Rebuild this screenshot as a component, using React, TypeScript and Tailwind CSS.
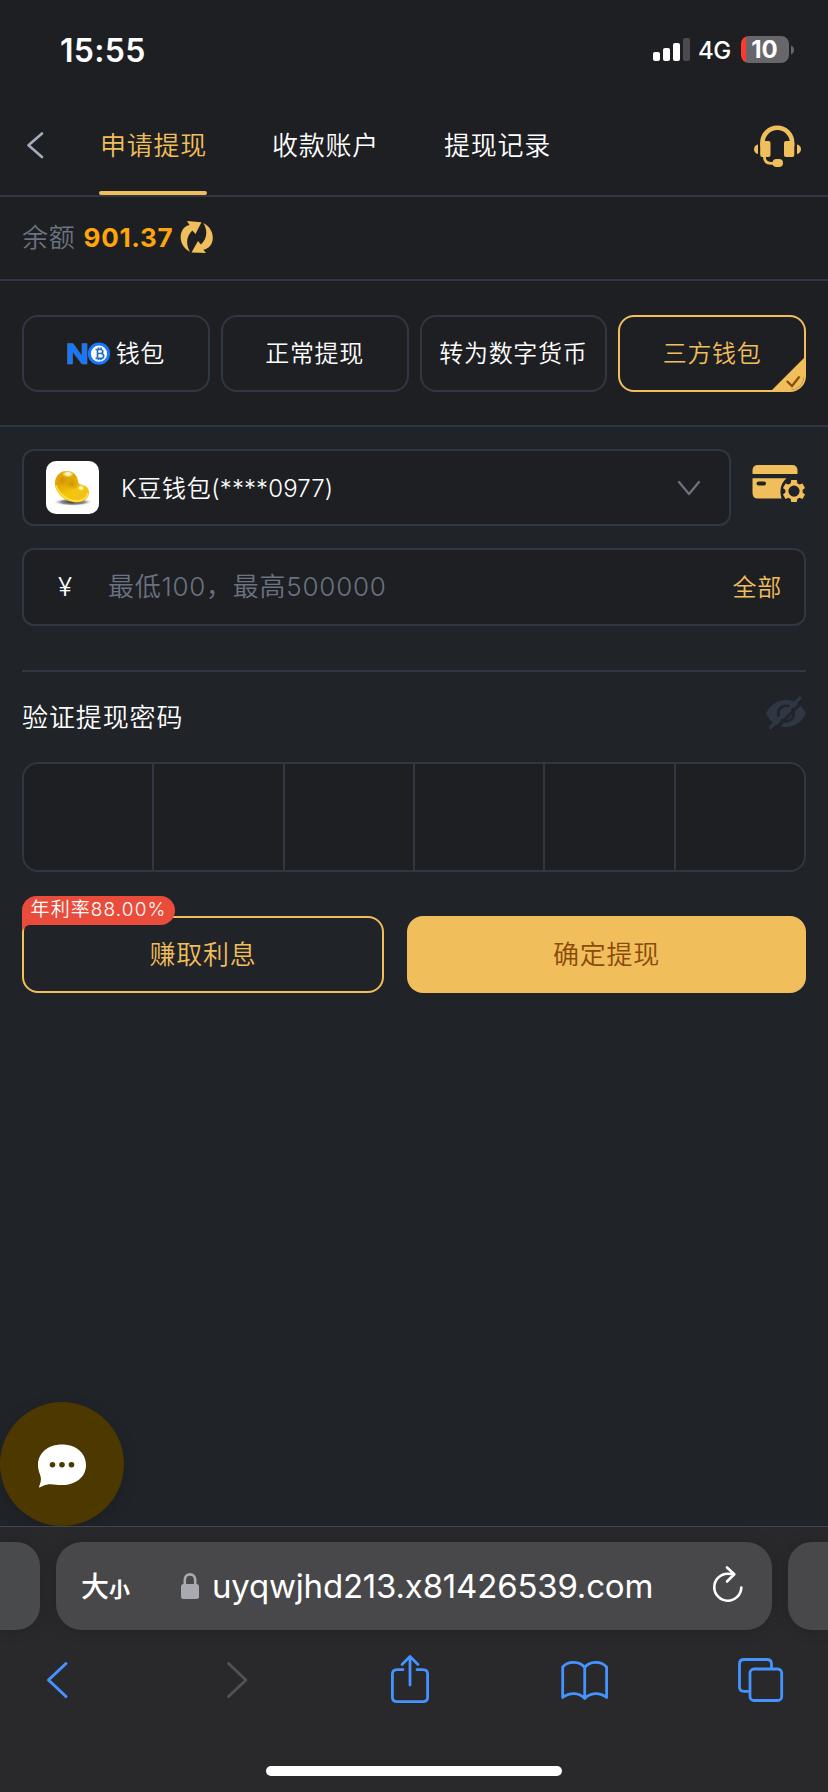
import React from "react";

const tabs = ["申请提现", "收款账户", "提现记录"];

function StatusBar() {
  return (
    <div className="flex h-[98px] shrink-0 items-start justify-between pr-[33px] pl-[60px]">
      <span className="mt-[35px] text-[32px] leading-[32px] font-semibold tracking-[0.3px] text-white">15:55</span>
      <div className="mt-[36px] flex h-[27px] items-center">
        <svg className="h-[27px] w-[38px]" viewBox="653 36 38 27">
          <rect x="653" y="52" width="7" height="9" rx="2" fill="#fff" />
          <rect x="663" y="48" width="7" height="13" rx="2" fill="#fff" />
          <rect x="673" y="43" width="7" height="18" rx="2" fill="#fff" />
          <rect x="683" y="38" width="7" height="23" rx="2" fill="#4b4b4f" />
        </svg>
        <span className="mt-[2px] ml-[7px] w-[34px] text-[24px] leading-[27px] font-medium tracking-[-0.5px] text-white">4G</span>
        <div className="ml-[9px] flex h-[27px] w-[48px] items-center justify-center overflow-hidden rounded-[8px] bg-[linear-gradient(90deg,#ff3b30_5px,#67676b_5px)] text-[24px] leading-none font-bold text-white">
          <span className="mt-px -ml-[1px]">10</span>
        </div>
        <svg className="ml-[2px] h-[10px] w-[4px]" viewBox="0 0 4 10">
          <path d="M0 0.5C2 1 3 3 3 5S2 9 0 9.5Z" fill="#67676b" />
        </svg>
      </div>
    </div>
  );
}

function Header() {
  return (
    <div className="flex h-[99px] shrink-0 items-stretch border-b-2 border-[#303742] pr-[26px] pl-[26px]">
      <svg className="mt-[33px] h-[28px] w-[18px]" viewBox="26 131 18 28" fill="none" stroke="#a3aebd" strokeWidth="2.6" strokeLinecap="round" strokeLinejoin="round">
        <path d="M42 133.500L28.500 145.300L42 157" />
      </svg>
      <div className="ml-[55px] flex gap-[64px]">
        {tabs.map((t, i) => (
          <div
            key={t}
            className={
              i === 0
                ? "flex w-[108px] flex-col items-center justify-between text-[#f0be5b]"
                : "flex w-[108px] flex-col items-center justify-between text-white"
            }
          >
            <span className="mt-[35px] pl-[1px] text-[26px] leading-[26px] tracking-[0.8px] whitespace-nowrap">{t}</span>
            {i === 0 && <span className="h-[4px] w-full rounded-[2px] bg-[#f0be5b]" />}
          </div>
        ))}
      </div>
      <svg className="mt-[26px] ml-auto h-[44px] w-[50px]" viewBox="752 124 50 44" fill="#f0be5b">
        <path d="M762.500 146V142.500A14.800 14.800 0 0 1 792.100 142.500V146" fill="none" stroke="#f0be5b" strokeWidth="4.600" />
        <rect x="760.200" y="141" width="10.300" height="16" rx="2" />
        <rect x="784" y="141" width="10.300" height="16" rx="2" />
        <path d="M758 144.500V154C755.500 153.500 754 151.500 754 149.200S755.500 145 758 144.500Z" />
        <path d="M797 144.500V154C799.500 153.500 801 151.500 801 149.200S799.500 145 797 144.500Z" />
        <path d="M764.300 156C764.300 161 766.500 163.300 771 163.300H777" fill="none" stroke="#f0be5b" strokeWidth="2.800" />
        <rect x="772.500" y="159" width="10.500" height="8" rx="4" />
      </svg>
    </div>
  );
}

function Balance() {
  return (
    <div className="flex h-[84px] shrink-0 items-center border-b-2 border-[#303742] pl-[22px]">
      <span className="text-[26px] leading-[26px] tracking-[0.8px] text-[#6b7280]">余额</span>
      <span className="ml-[8px] w-[91px] text-[26px] leading-[26px] font-bold tracking-[0.7px] text-[#ffa60a]">901.37</span>
      <svg className="ml-[5px] h-[34px] w-[34px]" viewBox="180 221 34 34" fill="#f0be5b">
        <path d="M187 221L201.500 222.200L195.500 234L192.300 230.500C187 235.500 185 243 190 251.700C182 248 179 239 181.500 232C183 228 186 225.500 189.500 225Z" />
        <path d="M206 253L191.500 252.600L198 241L200.900 244.500C206.500 239.500 208.500 231.500 203.300 223C211 226.500 214.500 235.500 212 242.500C210.500 246.500 207 249.300 203.300 249.800Z" />
      </svg>
    </div>
  );
}

function NoLogo() {
  return (
    <svg className="mr-[5px] h-[23px] w-[44px]" viewBox="67 341 44 23">
      <path d="M67.500 363V342.500H73L82 355V342.500H87V363H82L72.500 350.500V363Z" fill="#1677ff" stroke="#57708f" strokeWidth="0.700" />
      <circle cx="99" cy="352.700" r="9.600" fill="#fff" stroke="#1677ff" strokeWidth="3" />
      <path d="M95.500 348.500H100.500C103.500 348.500 103.500 352.500 100.500 352.500H97.500H101C104.500 352.500 104.500 357.300 101 357.300H95.500M97.500 348.500V357.300M98.500 346.500V348.500M101 346.500V348.500M98.500 357.300V359.300M101 357.300V359.300" fill="none" stroke="#2c6fb8" strokeWidth="1.700" />
    </svg>
  );
}

function Methods() {
  const base = "flex h-[77px] items-center justify-center rounded-[16px] border-2 text-[24px] leading-[24px] tracking-[0.7px] whitespace-nowrap";
  return (
    <div className="grid h-[146px] shrink-0 grid-cols-4 gap-[11px] border-b-2 border-[#303742] px-[22px] pt-[34px]">
      <div className={base + " border-[#303742] text-white"}>
        <NoLogo />
        钱包
      </div>
      <div className={base + " border-[#303742] text-white"}>正常提现</div>
      <div className={base + " border-[#303742] text-white"}>转为数字货币</div>
      <div className={base + " relative overflow-hidden border-[#f0be5b] text-[#f0be5b]"}>
        三方钱包
        <svg className="absolute right-[-1px] bottom-[-1px] h-[34px] w-[34px]" viewBox="771 357 34 34">
          <path d="M771 391L805 357V391Z" fill="#f0be5b" />
          <path d="M786.800 381L792 386L799.500 376.500" fill="none" stroke="#8a4a0c" strokeWidth="2.200" />
        </svg>
      </div>
    </div>
  );
}

function BeanLogo() {
  return (
    <svg className="h-[53px] w-[53px]" viewBox="46 461 53 53">
      <defs>
        <linearGradient id="bean" x1="0" y1="0" x2="0.6" y2="1">
          <stop offset="0" stopColor="#e6b010" />
          <stop offset="0.35" stopColor="#dfa400" />
          <stop offset="0.7" stopColor="#f4c60c" />
          <stop offset="1" stopColor="#f0c020" />
        </linearGradient>
        <radialGradient id="lobe">
          <stop offset="0" stopColor="#c98a06" stopOpacity="0.75" />
          <stop offset="1" stopColor="#cf8d00" stopOpacity="0" />
        </radialGradient>
        <radialGradient id="shade">
          <stop offset="0" stopColor="#222" stopOpacity="0.95" />
          <stop offset="0.6" stopColor="#444" stopOpacity="0.6" />
          <stop offset="1" stopColor="#fff" stopOpacity="0" />
        </radialGradient>
        <radialGradient id="shine">
          <stop offset="0" stopColor="#fffde8" />
          <stop offset="0.4" stopColor="#fff8c0" stopOpacity="0.9" />
          <stop offset="1" stopColor="#ffe96a" stopOpacity="0" />
        </radialGradient>
      </defs>
      <rect x="46" y="461" width="53" height="53" rx="10" fill="#fff" />
      <ellipse cx="73" cy="502" rx="20" ry="4" fill="url(#shade)" />
      <path d="M55 483C55 475 61 470.500 67.500 471C74 471.500 77.500 476 78 481.500C78.300 484 80 484.500 82.500 485C87 486 89.500 489 89 493.500C88.300 499 83 502.500 77 502.500C65 502.500 55 493 55 483Z" fill="url(#bean)" />
      <path d="M56.500 486C58.500 494 68 501 77 501C82 501 87 498 87.800 493.500" fill="none" stroke="#ffe23a" strokeWidth="1.600" strokeLinecap="round" />
      <ellipse cx="72" cy="484" rx="8" ry="6" fill="url(#lobe)" />
      <ellipse cx="62" cy="480" rx="5" ry="6" fill="url(#lobe)" />
      <ellipse cx="68" cy="474" rx="6" ry="3.500" fill="url(#shine)" />
      <ellipse cx="81" cy="488" rx="3.500" ry="3" fill="url(#shine)" />
    </svg>
  );
}

function WalletRow() {
  return (
    <div className="mt-[22px] flex h-[77px] items-start">
      <div className="flex h-[77px] w-[709px] shrink-0 items-center rounded-[12px] border-2 border-[#303742] bg-[#1e1f23] pr-[28px] pl-[22px]">
        <BeanLogo />
        <span className="mt-[2px] ml-[22px] text-[24px] leading-[24px] tracking-[0.7px] whitespace-nowrap text-white">
          K豆钱包<span className="tracking-[0.1px]">(****0977)</span>
        </span>
        <svg className="ml-auto h-[16px] w-[24px]" viewBox="677 480 24 16" fill="none" stroke="#6b7280" strokeWidth="2.200" strokeLinecap="round" strokeLinejoin="round">
          <path d="M679 482L689 494L699 482" />
        </svg>
      </div>
      <svg className="mt-[14px] ml-[20px] h-[42px] w-[55px] shrink-0" viewBox="751 463 55 42" fill="#f0be5b">
        <path d="M752.500 474V470.500Q752.500 465 758 465H792Q797.500 465 797.500 470.500V474Z" />
        <path fillRule="evenodd" d="M752.500 478.300H786.500C781 483 779 490 781.500 498.500H758Q752.500 498.500 752.500 493ZM758.500 481.500a2 2 0 0 0 0 4H764a2 2 0 0 0 0-4Z" />
        <path
          fillRule="evenodd"
          d="M791.200 480H796.800L797.300 483.300L799.500 484.600L802.500 483.400L805 488L802.600 490V492.500L805 494.600L802.500 499L799.500 497.800L797.300 499L796.800 502H791.200L790.700 499L788.500 497.800L785.500 499L783 494.600L785.400 492.500V490L783 488L785.500 483.400L788.500 484.600L790.700 483.300ZM794 485.500a5.600 5.600 0 1 0 0 11.200a5.600 5.600 0 0 0 0-11.200Z"
        />
      </svg>
    </div>
  );
}

function EyeOff() {
  return (
    <svg className="mt-[-9px] h-[34px] w-[41px]" viewBox="765 696 41 34">
      <path d="M766 713.500C770 705 777.500 700 786 700S802 705 806 713.500C802 722 794.500 727 786 727S770 722 766 713.500Z" fill="#303744" />
      <circle cx="786" cy="713.500" r="7.800" fill="none" stroke="#202328" strokeWidth="2.800" />
      <path d="M772.500 732L805 699" stroke="#202328" strokeWidth="3" />
      <path d="M770.500 727.500L800 697.800" stroke="#303744" strokeWidth="3.200" strokeLinecap="round" />
    </svg>
  );
}

function Main() {
  return (
    <div className="flex h-[1099px] shrink-0 flex-col bg-[#202328] px-[22px]">
      <WalletRow />
      <div className="mt-[22px] flex h-[78px] shrink-0 items-center rounded-[12px] border-2 border-[#303742] bg-[#1e1f23] pr-[22px] pl-[34px]">
        <span className="w-[50px] text-[26px] leading-[26px] text-white">¥</span>
        <span className="text-[26px] leading-[26px] tracking-[0.75px] whitespace-nowrap text-[#6b7280]">最低100，最高500000</span>
        <span className="mt-[2px] ml-auto text-[24px] leading-[24px] tracking-[0.7px] text-[#f0be5b]">全部</span>
      </div>
      <div className="mt-[44px] h-[2px] shrink-0 bg-[#303742]" />
      <div className="flex h-[90px] shrink-0 items-center justify-between">
        <span className="mt-[2px] text-[26px] leading-[26px] tracking-[0.9px] text-white">验证提现密码</span>
        <EyeOff />
      </div>
      <div className="grid h-[110px] shrink-0 grid-cols-[130px_131px_130px_130px_131px_1fr] overflow-hidden rounded-[16px] border-2 border-[#303742] bg-[#1e1f23]">
        {[0, 1, 2, 3, 4].map((i) => (
          <div key={i} className="border-r-2 border-[#303742]" />
        ))}
        <div />
      </div>
      <div className="mt-[44px] flex shrink-0 gap-[23px] text-[26px] leading-[26px] tracking-[0.8px]">
        <div className="relative flex h-[77px] w-[362px] items-center justify-center rounded-[16px] border-2 border-[#f0be5b] text-[#f0be5b]">
          赚取利息
          <div className="absolute top-[-22px] left-[-2px] flex h-[29px] w-[153px] items-center justify-center rounded-[15px] rounded-bl-none bg-[#e94c3b] pb-[2px] text-[19px] leading-none tracking-[1.1px] whitespace-nowrap text-white">
            年利率88.00%
            <svg className="absolute top-[29px] left-0 h-[6px] w-[7px]" viewBox="0 0 7 6">
              <path d="M0 0H7C4 0.500 2 3 0 6Z" fill="#e94c3b" />
            </svg>
          </div>
        </div>
        <div className="flex h-[77px] flex-1 items-center justify-center rounded-[16px] bg-[#f0be5b] text-[#8a4a0c]">确定提现</div>
      </div>
      <div className="mt-auto -ml-[22px] flex h-[124px] w-[124px] items-center justify-center rounded-full bg-[#4d3800] shadow-[0_4px_16px_rgba(0,0,0,0.15)]">
        <svg className="mt-[3px] h-[45px] w-[50px]" viewBox="37 1443 50 45">
          <path d="M62 1444.500C76 1444.500 86 1453 86 1465S76 1485 62 1485C56 1485 52 1483.500 47.500 1484.500C44.500 1485 42 1486.500 39.300 1487.500C38.800 1487.300 39 1486.500 39.500 1485.500C41.500 1481 41.300 1477.500 39.800 1474C38.600 1471 38 1468 38 1465C38 1453 48 1444.500 62 1444.500Z" fill="#fff" />
          <circle cx="52.500" cy="1464.700" r="2.800" fill="#4d3800" />
          <circle cx="62" cy="1464.700" r="2.800" fill="#4d3800" />
          <circle cx="71.500" cy="1464.700" r="2.800" fill="#4d3800" />
        </svg>
      </div>
    </div>
  );
}

function BrowserBar() {
  return (
    <div className="flex h-[266px] shrink-0 flex-col border-t border-[#454649] bg-[#29292b]">
      <div className="mt-[15px] flex h-[88px] gap-[16px]">
        <div className="w-[40px] rounded-r-[24px] bg-[#484a4b] shadow-[0_0_16px_rgba(0,0,0,0.15)]" />
        <div className="flex w-[716px] items-center rounded-[26px] bg-[#48484a] pr-[28px] pl-[25px] text-white shadow-[0_0_16px_rgba(0,0,0,0.15)]">
          <span className="mt-[2px] flex w-[99px] items-baseline leading-none">
            <span className="text-[28px] font-medium">大</span>
            <span className="text-[21px] font-bold">小</span>
          </span>
          <svg className="h-[28px] w-[20px]" viewBox="180 1572 20 28">
            <path d="M184.800 1585V1580C184.800 1572.500 195.200 1572.500 195.200 1580V1585" fill="none" stroke="#a9a9b2" strokeWidth="2.600" />
            <rect x="181" y="1584" width="18" height="15" rx="2.500" fill="#a9a9b2" />
          </svg>
          <span className="ml-[12px] text-[33px] leading-[33px] font-normal tracking-[-0.2px] whitespace-nowrap">uyqwjhd213.x81426539.com</span>
          <svg className="mt-[-4px] ml-auto h-[38px] w-[32px]" viewBox="712 1565 32 38" fill="none" stroke="#fff" strokeWidth="2.600" strokeLinecap="round" strokeLinejoin="round">
            <path d="M741.300 1587.500A13.500 13.500 0 1 1 727.700 1573.700C730.500 1573.700 732 1573.900 734 1574.300M727 1567.500L734.300 1574.300L727 1581.500" />
          </svg>
        </div>
        <div className="w-[40px] rounded-l-[24px] bg-[#48484a] shadow-[0_0_16px_rgba(0,0,0,0.15)]" />
      </div>
      <div className="mt-[22px] flex h-[56px] items-start pl-[46px]">
        <svg className="h-[56px] w-[23px]" viewBox="46 1652 23 56" fill="none" stroke="#4493ff" strokeWidth="3" strokeLinecap="round" strokeLinejoin="round">
          <path d="M66 1663.500L48.500 1680L66 1696.500" />
        </svg>
        <svg className="ml-[157px] h-[56px] w-[23px]" viewBox="226 1652 23 56" fill="none" stroke="#515153" strokeWidth="3" strokeLinecap="round" strokeLinejoin="round">
          <path d="M228.500 1663.500L246 1680L228.500 1696.500" />
        </svg>
        <svg className="ml-[141px] h-[56px] w-[40px]" viewBox="390 1652 40 56" fill="none" stroke="#4493ff" strokeWidth="2.800" strokeLinecap="round" strokeLinejoin="round">
          <path d="M403 1669.700H397Q392.400 1669.700 392.400 1674.300V1697Q392.400 1701.600 397 1701.600H423Q427.600 1701.600 427.600 1697V1674.300Q427.600 1669.700 423 1669.700H417M410 1685V1657M402 1664.500L410 1656.500L418 1664.500" />
        </svg>
        <svg className="ml-[130px] h-[56px] w-[50px]" viewBox="560 1652 50 56" fill="none" stroke="#4493ff" strokeWidth="2.800" strokeLinecap="round" strokeLinejoin="round">
          <path d="M584.700 1698.500C579 1692.500 570 1692 562.700 1697.500V1667C568 1660.500 580 1660.800 584.700 1667.500C589.500 1660.800 601 1660.500 606.600 1667V1697.500C599.500 1692 590.500 1692.500 584.700 1698.500ZM584.700 1667.500V1698.500" />
        </svg>
        <svg className="ml-[127px] h-[56px] w-[47px]" viewBox="737 1652 47 56" fill="none" stroke="#4493ff" strokeWidth="2.800" strokeLinejoin="round">
          <path d="M771.500 1669V1664Q771.500 1659.500 767 1659.500H744Q739.500 1659.500 739.500 1664V1687Q739.500 1691.300 744 1691.300H750" />
          <rect x="750" y="1669" width="31.700" height="31.500" rx="4" />
        </svg>
      </div>
      <div className="mx-auto mt-[58px] h-[10px] w-[296px] rounded-full bg-white" />
    </div>
  );
}

export default function App() {
  return (
    <div className="flex h-[1792px] w-[828px] flex-col overflow-hidden bg-[#1e1f23] font-['Inter','Noto_Sans_CJK_SC',sans-serif] font-[350]">
      <StatusBar />
      <Header />
      <Balance />
      <Methods />
      <Main />
      <BrowserBar />
    </div>
  );
}
